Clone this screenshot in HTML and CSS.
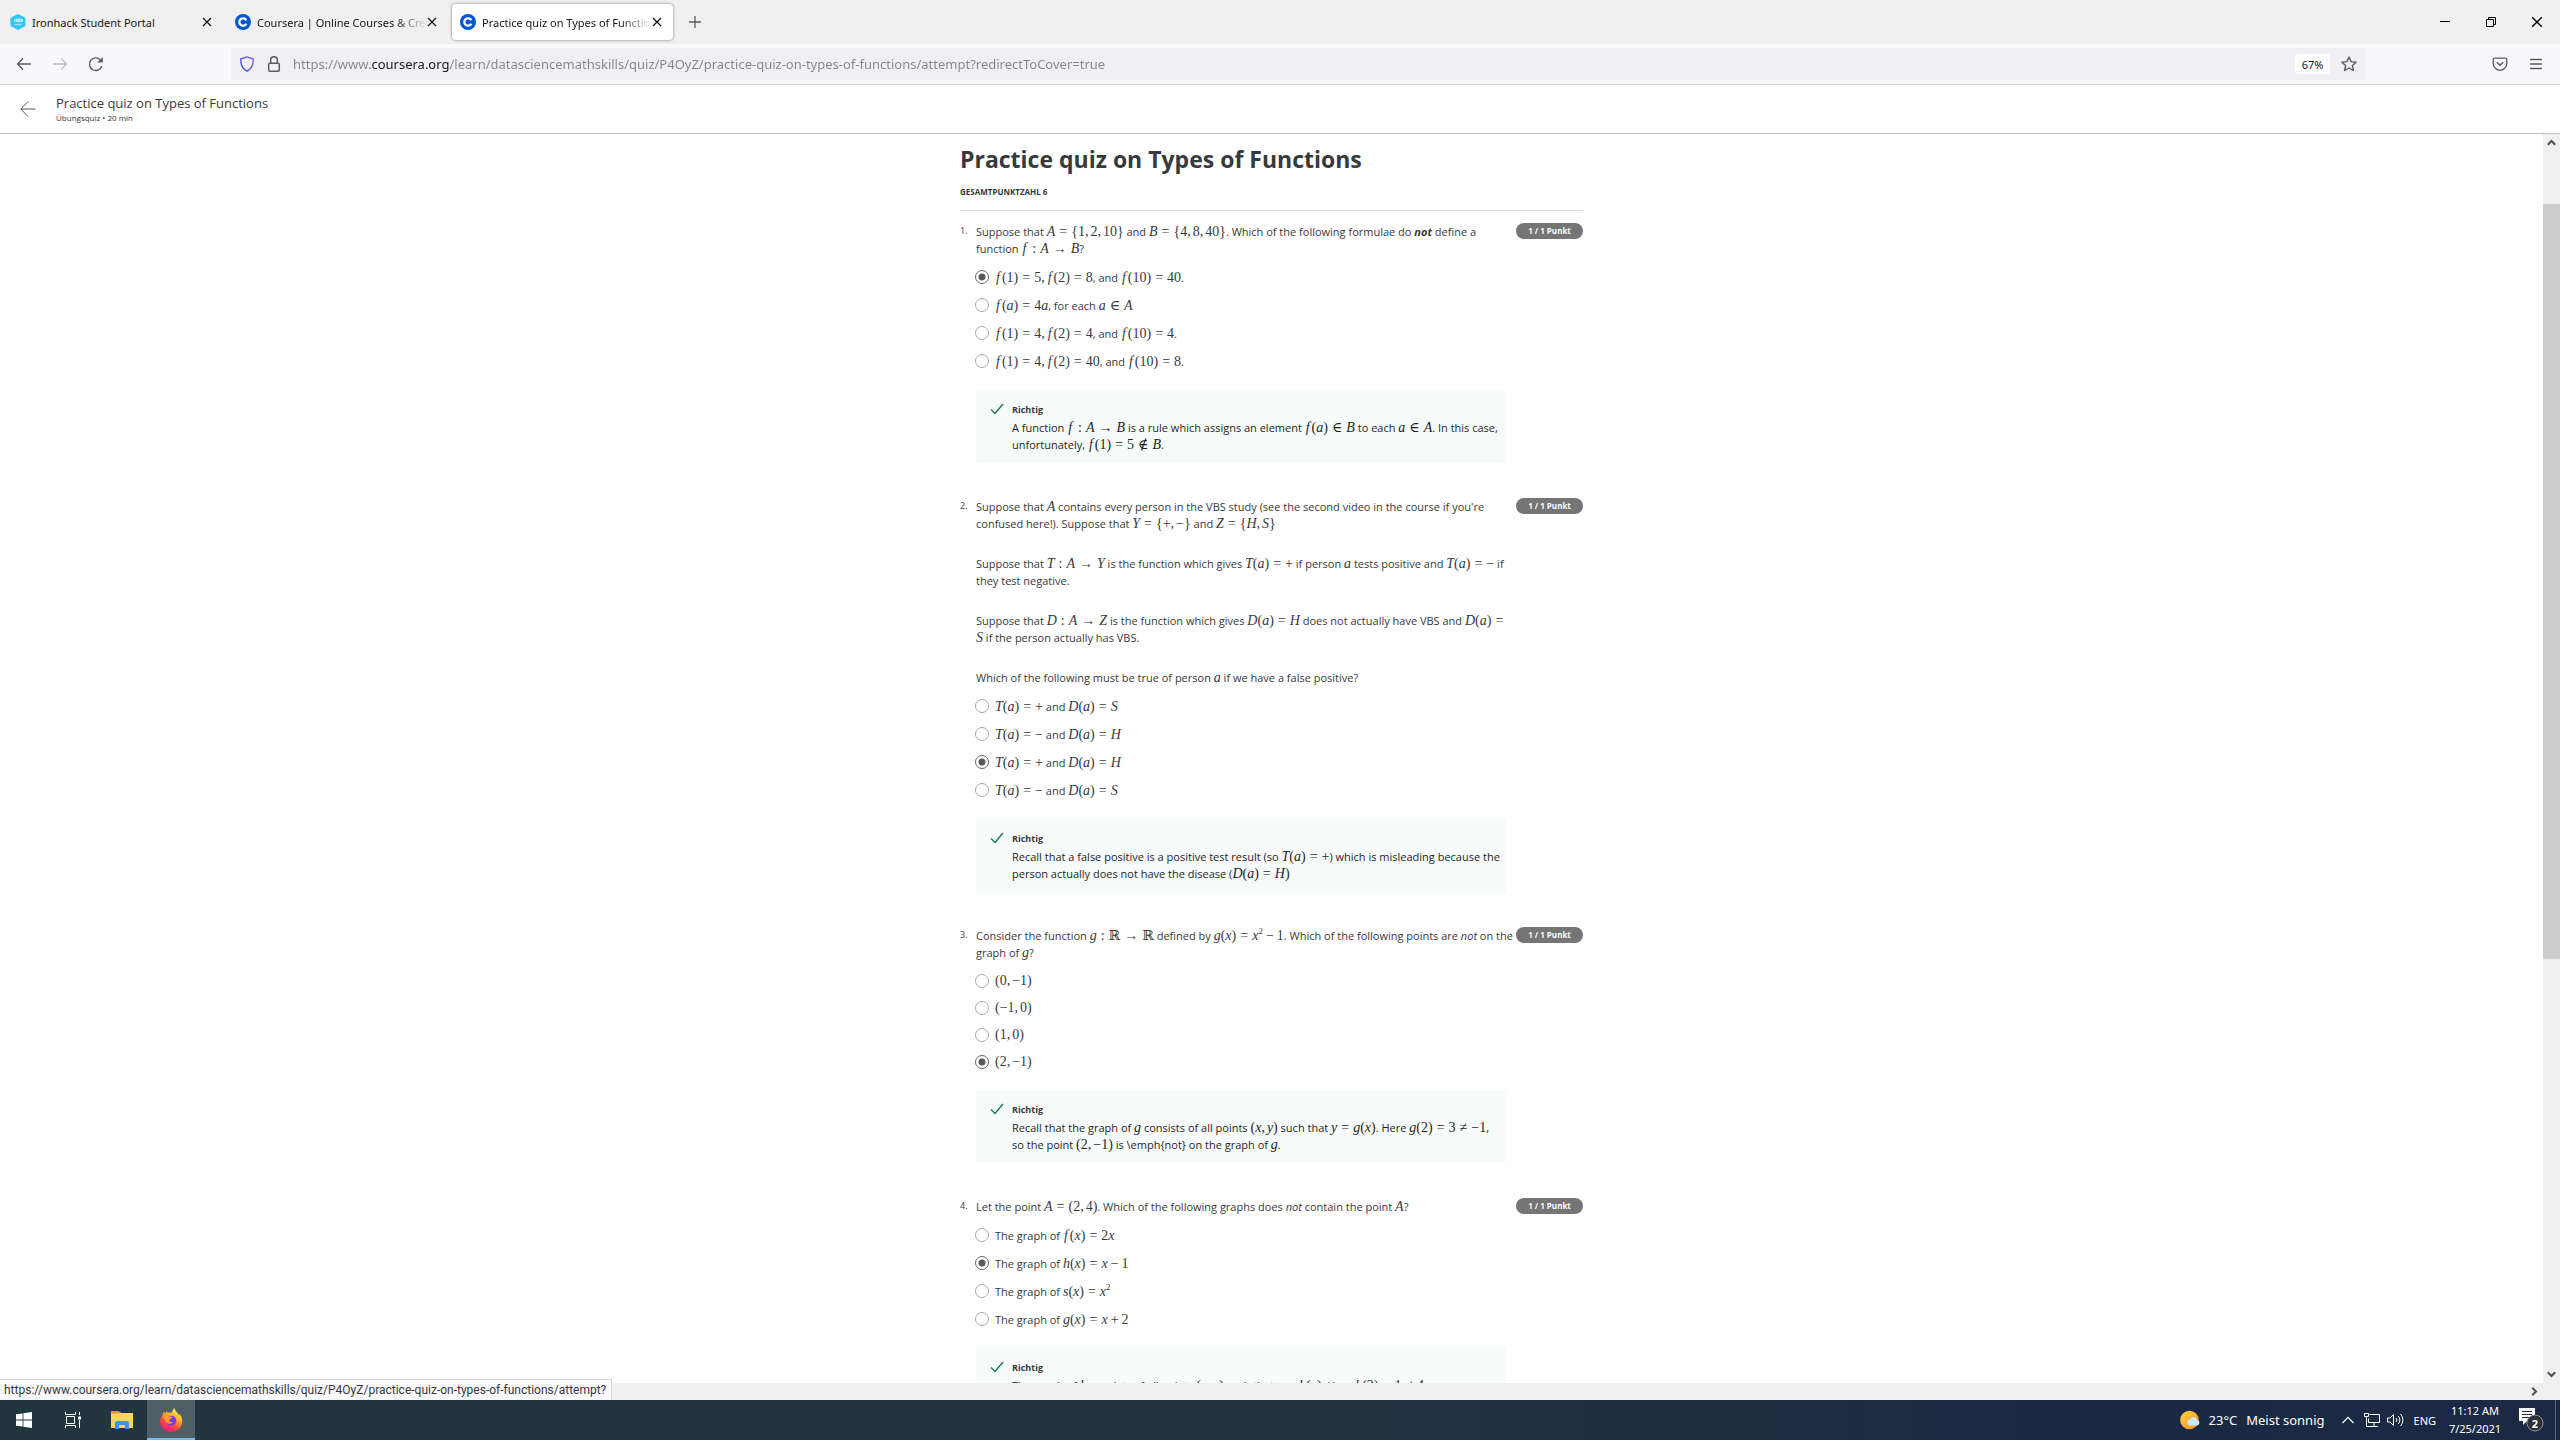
FILE: index.html
```
<!DOCTYPE html>
<html lang="de">
<head>
<meta charset="utf-8">
<meta name="viewport" content="width=device-width, initial-scale=1">
<title>Practice quiz on Types of Functions</title>
<link rel="stylesheet" href="styles.css">
</head>
<body>
<svg class="defs" width="0" height="0" aria-hidden="true">
  <symbol id="x" viewBox="0 0 10 10"><path d="M1 1l8 8M9 1l-8 8" fill="none" stroke="currentColor" stroke-width="1.2"/></symbol>
  <symbol id="c" viewBox="0 0 16 16"><circle cx="8" cy="8" r="8" fill="#0056d2"/><path d="M11.3 9.7A3.7 3.7 0 1 1 11.3 6.300" fill="none" stroke="#fff" stroke-width="2.300"/></symbol>
  <symbol id="check" viewBox="0 0 14 12"><path d="M1 6.500L5 10.500L13 1" fill="none" stroke="#1d7c50" stroke-width="1.500"/></symbol>
</svg>

<header class="tabbar">
  <div class="tab">
    <svg width="16" height="16" viewBox="0 0 16 16"><path d="M8 0l7.500 4v8L8 16 .5 12V4z" fill="#2dc5fa"/><path d="M4.500 5v3M6 8V5h1.500v1.500H6l1.500 1.500M8.500 5H10v3H8.500zM11 8V5l1.500 3V5" fill="none" stroke="#e8faff" stroke-width=".8"/><path d="M4.500 10.500h7" stroke="#9be3fb" stroke-width="1.500"/></svg>
    <span class="tab-title">Ironhack Student Portal</span>
    <button class="tab-close" aria-label="Close tab"><svg width="10" height="10"><use href="#x"/></svg></button>
  </div>
  <div class="tab">
    <svg width="16" height="16"><use href="#c"/></svg>
    <span class="tab-title fade">Coursera | Online Courses &amp; Credentials</span>
    <button class="tab-close" aria-label="Close tab"><svg width="10" height="10"><use href="#x"/></svg></button>
  </div>
  <div class="tab active">
    <svg width="16" height="16"><use href="#c"/></svg>
    <span class="tab-title fade">Practice quiz on Types of Functions</span>
    <button class="tab-close" aria-label="Close tab"><svg width="10" height="10"><use href="#x"/></svg></button>
  </div>
  <button class="tool" aria-label="New tab"><svg width="14" height="14" viewBox="0 0 14 14"><path d="M7 1v12M1 7h12" stroke="#5b5b66" stroke-width="1.300"/></svg></button>
  <div class="window-buttons">
    <button aria-label="Minimize"><svg width="10" height="10" viewBox="0 0 10 10"><path d="M0 4.500h10" stroke="#000"/></svg></button>
    <button aria-label="Restore"><svg width="10" height="10" viewBox="0 0 10 10"><path d="M.5 2.500h7v7h-7zM2.500 2.500v-2h7v7h-2" fill="none" stroke="#000"/></svg></button>
    <button aria-label="Close"><svg width="12" height="12"><use href="#x"/></svg></button>
  </div>
</header>

<nav class="toolbar">
  <button class="tool" aria-label="Back"><svg width="16" height="16" viewBox="0 0 16 16"><path d="M15 8H1.500M7 2.500L1.500 8 7 13.500" fill="none" stroke="#5b5b66" stroke-width="1.400"/></svg></button>
  <button class="tool" aria-label="Forward" disabled><svg width="16" height="16" viewBox="0 0 16 16"><path d="M1 8h13.500M9 2.500L14.500 8 9 13.500" fill="none" stroke="#bdbdc2" stroke-width="1.400"/></svg></button>
  <button class="tool" aria-label="Reload"><svg width="16" height="16" viewBox="0 0 16 16"><path d="M13.800 10A6.300 6.300 0 1 1 12.500 4" fill="none" stroke="#5b5b66" stroke-width="1.400"/><path d="M14.800 1v5.500H9.300z" fill="#5b5b66"/></svg></button>
  <div class="urlbar">
    <svg width="16" height="16" viewBox="0 0 16 16"><defs><linearGradient id="sh" x1="0" y1="1" x2="1" y2="0"><stop offset="0" stop-color="#2b4fd0"/><stop offset="1" stop-color="#9a5cff"/></linearGradient></defs><path d="M8 .8l6.300 2.200c.2 5.500-1.300 9.500-6.300 12.200C3 12.500 1.500 8.500 1.700 3z" fill="none" stroke="url(#sh)" stroke-width="1.400" stroke-linejoin="round"/></svg>
    <svg width="16" height="16" viewBox="0 0 16 16"><rect x="2.700" y="7.200" width="10.600" height="8" rx="1.200" fill="none" stroke="#5b5b66" stroke-width="1.500"/><path d="M4.700 7V4a3.300 3.300 0 0 1 6.600 0v3" fill="none" stroke="#5b5b66" stroke-width="1.500"/></svg>
    <input class="url" aria-label="Address" value="https://www.coursera.org/learn/datasciencemathskills/quiz/P4OyZ/practice-quiz-on-types-of-functions/attempt?redirectToCover=true">
    <button class="zoom-level">67%</button>
    <button class="star" aria-label="Bookmark"><svg width="16" height="16" viewBox="0 0 16 16"><path d="M8 1l2.100 4.600 5 .6-3.700 3.400 1 4.900L8 12l-4.400 2.500 1-4.900L.9 6.200l5-.6z" fill="none" stroke="#5b5b66" stroke-width="1.400" stroke-linejoin="round"/></svg></button>
  </div>
  <button class="tool" aria-label="Pocket"><svg width="16" height="16" viewBox="0 0 16 16"><path d="M2.500 2.200h11a1.300 1.300 0 0 1 1.300 1.300V7.500a6.800 6.800 0 0 1-13.600 0V3.500a1.300 1.300 0 0 1 1.300-1.300z" fill="none" stroke="#5b5b66" stroke-width="1.300"/><path d="M4.800 6.200L8 9.200l3.200-3" fill="none" stroke="#5b5b66" stroke-width="1.500"/></svg></button>
  <button class="tool" aria-label="Menu"><svg width="14" height="14" viewBox="0 0 14 14"><path d="M1 2.500h12M1 7h12M1 11.500h12" stroke="#5b5b66" stroke-width="1.300"/></svg></button>
</nav>

<div class="quiz-header">
  <a href="#quiz" class="back" aria-label="Zurück"><svg width="16" height="16" viewBox="0 0 16 16"><path d="M15.500 8H1M8 .5L.8 8 8 15.500" fill="none" stroke="#555" stroke-width="1"/></svg></a>
  <div>
    <div class="quiz-name">Practice quiz on Types of Functions</div>
    <div class="quiz-meta">Übungsquiz • 20 min</div>
  </div>
</div>

<div class="viewport">
<main id="quiz">
  <div class="quiz">
    <h1>Practice quiz on Types of Functions</h1>
    <p class="total">GESAMTPUNKTZAHL 6</p>

    <section class="question">
      <span class="num">1.</span>
      <div class="body">
        <p>Suppose that <span class="m"><i>A</i><b>=</b>{1,<s></s>2,<s></s>10}</span> and <span class="m"><i>B</i><b>=</b>{4,<s></s>8,<s></s>40}</span>. Which of the following formulae do <strong><em>not</em></strong> define a<br>function <span class="m"><i class="f">f</i><b>:</b><i>A</i><b>→</b><i>B</i></span>?</p>
        <div class="options">
          <label><input type="radio" name="q1" checked><span><span class="m"><i class="f">f</i>(1)<b>=</b>5,<s></s><i class="f">f</i>(2)<b>=</b>8</span>, and <span class="m"><i class="f">f</i>(10)<b>=</b>40</span>.</span></label>
          <label><input type="radio" name="q1"><span><span class="m"><i class="f">f</i>(<i>a</i>)<b>=</b>4<i>a</i></span>, for each <span class="m"><i>a</i><b>∈</b><i>A</i></span></span></label>
          <label><input type="radio" name="q1"><span><span class="m"><i class="f">f</i>(1)<b>=</b>4,<s></s><i class="f">f</i>(2)<b>=</b>4</span>, and <span class="m"><i class="f">f</i>(10)<b>=</b>4</span>.</span></label>
          <label><input type="radio" name="q1"><span><span class="m"><i class="f">f</i>(1)<b>=</b>4,<s></s><i class="f">f</i>(2)<b>=</b>40</span>, and <span class="m"><i class="f">f</i>(10)<b>=</b>8</span>.</span></label>
        </div>
        <div class="feedback">
          <svg width="14" height="12"><use href="#check"/></svg>
          <div><h2>Richtig</h2>
          <p>A function <span class="m"><i class="f">f</i><b>:</b><i>A</i><b>→</b><i>B</i></span> is a rule which assigns an element <span class="m"><i class="f">f</i>(<i>a</i>)<b>∈</b><i>B</i></span> to each <span class="m"><i>a</i><b>∈</b><i>A</i></span>. In this case,<br>unfortunately, <span class="m"><i class="f">f</i>(1)<b>=</b>5<b>∉</b><i>B</i></span>.</p></div>
        </div>
      </div>
      <span class="points">1 / 1 Punkt</span>
    </section>

    <section class="question">
      <span class="num">2.</span>
      <div class="body">
        <p>Suppose that <span class="m"><i>A</i></span> contains every person in the VBS study (see the second video in the course if you're<br>confused here!). Suppose that <span class="m"><i>Y</i><b>=</b>{+,<s></s>−}</span> and <span class="m"><i>Z</i><b>=</b>{<i>H</i>,<s></s><i>S</i>}</span></p>
        <p>Suppose that <span class="m"><i>T</i><b>:</b><i>A</i><b>→</b><i>Y</i></span> is the function which gives <span class="m"><i>T</i>(<i>a</i>)<b>=</b>+</span> if person <span class="m"><i>a</i></span> tests positive and <span class="m"><i>T</i>(<i>a</i>)<b>=</b>−</span> if<br>they test negative.</p>
        <p>Suppose that <span class="m"><i>D</i><b>:</b><i>A</i><b>→</b><i>Z</i></span> is the function which gives <span class="m"><i>D</i>(<i>a</i>)<b>=</b><i>H</i></span> does not actually have VBS and <span class="m"><i>D</i>(<i>a</i>)<b>=</b></span><br><span class="m"><i>S</i></span> if the person actually has VBS.</p>
        <p>Which of the following must be true of person <span class="m"><i>a</i></span> if we have a false positive?</p>
        <div class="options">
          <label><input type="radio" name="q2"><span><span class="m"><i>T</i>(<i>a</i>)<b>=</b>+</span> and <span class="m"><i>D</i>(<i>a</i>)<b>=</b><i>S</i></span></span></label>
          <label><input type="radio" name="q2"><span><span class="m"><i>T</i>(<i>a</i>)<b>=</b>−</span> and <span class="m"><i>D</i>(<i>a</i>)<b>=</b><i>H</i></span></span></label>
          <label><input type="radio" name="q2" checked><span><span class="m"><i>T</i>(<i>a</i>)<b>=</b>+</span> and <span class="m"><i>D</i>(<i>a</i>)<b>=</b><i>H</i></span></span></label>
          <label><input type="radio" name="q2"><span><span class="m"><i>T</i>(<i>a</i>)<b>=</b>−</span> and <span class="m"><i>D</i>(<i>a</i>)<b>=</b><i>S</i></span></span></label>
        </div>
        <div class="feedback">
          <svg width="14" height="12"><use href="#check"/></svg>
          <div><h2>Richtig</h2>
          <p>Recall that a false positive is a positive test result (so <span class="m"><i>T</i>(<i>a</i>)<b>=</b>+</span>) which is misleading because the<br>person actually does not have the disease (<span class="m"><i>D</i>(<i>a</i>)<b>=</b><i>H</i>)</span></p></div>
        </div>
      </div>
      <span class="points">1 / 1 Punkt</span>
    </section>

    <section class="question">
      <span class="num">3.</span>
      <div class="body">
        <p>Consider the function <span class="m"><i>g</i><b>:</b>ℝ<b>→</b>ℝ</span> defined by <span class="m"><i>g</i>(<i>x</i>)<b>=</b><i>x</i><sup>2</sup><u>−</u>1</span>. Which of the following points are <em>not</em> on the<br>graph of <span class="m"><i>g</i></span>?</p>
        <div class="options compact">
          <label><input type="radio" name="q3"><span class="m">(0,<s></s>−1)</span></label>
          <label><input type="radio" name="q3"><span class="m">(−1,<s></s>0)</span></label>
          <label><input type="radio" name="q3"><span class="m">(1,<s></s>0)</span></label>
          <label><input type="radio" name="q3" checked><span class="m">(2,<s></s>−1)</span></label>
        </div>
        <div class="feedback">
          <svg width="14" height="12"><use href="#check"/></svg>
          <div><h2>Richtig</h2>
          <p>Recall that the graph of <span class="m"><i>g</i></span> consists of all points <span class="m">(<i>x</i>,<s></s><i>y</i>)</span> such that <span class="m"><i>y</i><b>=</b><i>g</i>(<i>x</i>)</span>. Here <span class="m"><i>g</i>(2)<b>=</b>3<b>≠</b>−1</span>,<br>so the point <span class="m">(2,<s></s>−1)</span> is \emph{not} on the graph of <span class="m"><i>g</i></span>.</p></div>
        </div>
      </div>
      <span class="points">1 / 1 Punkt</span>
    </section>

    <section class="question">
      <span class="num">4.</span>
      <div class="body">
        <p>Let the point <span class="m"><i>A</i><b>=</b>(2,<s></s>4)</span>. Which of the following graphs does <em>not</em> contain the point <span class="m"><i>A</i></span>?</p>
        <div class="options">
          <label><input type="radio" name="q4"><span>The graph of <span class="m"><i class="f">f</i>(<i>x</i>)<b>=</b>2<i>x</i></span></span></label>
          <label><input type="radio" name="q4" checked><span>The graph of <span class="m"><i>h</i>(<i>x</i>)<b>=</b><i>x</i><u>−</u>1</span></span></label>
          <label><input type="radio" name="q4"><span>The graph of <span class="m"><i>s</i>(<i>x</i>)<b>=</b><i>x</i><sup>2</sup></span></span></label>
          <label><input type="radio" name="q4"><span>The graph of <span class="m"><i>g</i>(<i>x</i>)<b>=</b><i>x</i><u>+</u>2</span></span></label>
        </div>
        <div class="feedback">
          <svg width="14" height="12"><use href="#check"/></svg>
          <div><h2>Richtig</h2>
          <p>The graph of <span class="m"><i>h</i></span> consists of all points <span class="m">(<i>x</i>,<s></s><i>y</i>)</span> such that <span class="m"><i>y</i><b>=</b><i>h</i>(<i>x</i>)</span>. Here <span class="m"><i>h</i>(2)<b>=</b>1<b>≠</b>4</span></p></div>
        </div>
      </div>
      <span class="points">1 / 1 Punkt</span>
    </section>
  </div>
</main>
<div class="vscroll">
  <button aria-label="Scroll up"><svg width="9" height="7" viewBox="0 0 9 7"><path d="M.8 5.700L4.500 2l3.700 3.700" fill="none" stroke="#505050" stroke-width="2"/></svg></button>
  <div class="track"><div class="thumb"></div></div>
  <button aria-label="Scroll down"><svg width="9" height="7" viewBox="0 0 9 7"><path d="M.8 1.300L4.500 5l3.700-3.700" fill="none" stroke="#505050" stroke-width="2"/></svg></button>
</div>
</div>

<footer class="hscroll">
  <div class="status">https://www.coursera.org/learn/datasciencemathskills/quiz/P4OyZ/practice-quiz-on-types-of-functions/attempt?</div>
  <button aria-label="Scroll right"><svg width="7" height="9" viewBox="0 0 7 9"><path d="M1.300 .8L5 4.500 1.300 8.200" fill="none" stroke="#505050" stroke-width="2"/></svg></button>
</footer>

<div class="taskbar">
  <button aria-label="Start"><svg width="16" height="16" viewBox="0 0 16 16"><path d="M0 2.300L6.600 1.400v6.200H0zM7.400 1.300L16 0v7.600H7.400zM0 8.400h6.600v6.200L0 13.700zM7.400 8.400H16V16l-8.600-1.300z" fill="#fff"/></svg></button>
  <button aria-label="Task View"><svg width="16" height="16" viewBox="0 0 16 16"><path d="M.5 0v2.500h10V0M.5 16v-2.500h10V16M1.500 4.500h8v7h-8z" fill="none" stroke="#fff"/><path d="M14.500 0v3M14.500 8v8" stroke="#fff"/><path d="M13 4.500h3v3h-3z" fill="#fff"/></svg></button>
  <button aria-label="Explorer"><svg width="22" height="18" viewBox="0 0 22 18"><path d="M0 1h9l1 1h12v15H0z" fill="#ffd45c"/><path d="M0 0h8l1 2.500H0z" fill="#e09a0c"/><path d="M4 18v-6a2 2 0 0 1 2-2h10a2 2 0 0 1 2 2v6h-4v-4H8v4z" fill="#3b96dd"/></svg></button>
  <button class="running" aria-label="Firefox"><svg width="24" height="24" viewBox="0 0 24 24"><defs><linearGradient id="ff" x1=".8" y1=".1" x2=".3" y2="1"><stop offset="0" stop-color="#fff44f"/><stop offset=".35" stop-color="#ffa52a"/><stop offset=".65" stop-color="#ff4a3d"/><stop offset="1" stop-color="#e31587"/></linearGradient></defs><path d="M15.500 0c-2 2-2.500 3.500-2.300 5-1.400-.6-3-.6-4.200 0L7.500 3 6.700 5 4 4.200 3.500 7.500C1.500 9.500 1 11.500 1 13.500 1 19 5.500 24 12 24s11.200-5 11.200-10.800c0-3.500-1.400-6-3-7.500l.2 2.300C19 4.500 16 3.500 15.500 0z" fill="url(#ff)"/><circle cx="12.300" cy="12.800" r="5" fill="#7a3be8"/><path d="M3.500 7c2 0 3.500-.3 5.500.5 1 1 2.500 1.200 4.500 1.500-.5 1.500-2.500 1.500-3 3-.5 1.800 1.500 2.700 3.500 2-1 2.500-6 2.500-7.500-1C5.500 10.500 4 10 3.500 7z" fill="#ff9a2b"/></svg></button>
  <div class="tray">
    <svg width="20" height="20" viewBox="0 0 20 20"><defs><linearGradient id="sun" x2="1" y2="1"><stop offset="0" stop-color="#ffd84a"/><stop offset="1" stop-color="#f58a1c"/></linearGradient></defs><circle cx="9.500" cy="10" r="9.300" fill="url(#sun)"/><path d="M10.500 15.500a3 3 0 0 1-.3-6A3.800 3.800 0 0 1 17.300 10a2.800 2.800 0 0 1-.3 5.500z" fill="#cfe9fb"/></svg>
    <span class="weather">23°C</span>
    <span class="weather">Meist sonnig</span>
    <svg class="chev" width="12" height="8" viewBox="0 0 12 8"><path d="M.5 7L6 1.300 11.500 7" fill="none" stroke="#fff" stroke-width="1.200"/></svg>
    <svg width="16" height="14" viewBox="0 0 16 14"><path d="M5.500 1.500h10v8h-11v-4M10 10v3M6 13.500h8" fill="none" stroke="#fff"/><path d="M.5.5h4v3h-4zM2.500 4v9.500H6" fill="none" stroke="#fff"/></svg>
    <svg width="17" height="14" viewBox="0 0 17 14"><path d="M.5 5h2.500L6.500 1.500v11L3 9H.5z" fill="none" stroke="#fff"/><path d="M9 5a3 3 0 0 1 0 4M11.300 3a6 6 0 0 1 0 8M13.600 1a9 9 0 0 1 0 12" fill="none" stroke="#fff"/></svg>
    <span class="lang">ENG</span>
    <div class="clock"><span>11:12 AM</span><span>7/25/2021</span></div>
    <button class="notify" aria-label="Notifications"><svg width="26" height="26" viewBox="0 0 26 26"><path d="M1 1h16v13H9l-4 4v-4H1z" fill="#fff"/><path d="M4 4.500h10M4 7.500h10M4 10.500h7" stroke="#1b2945"/><circle cx="17" cy="16" r="8" fill="#2b2f36" stroke="#8a8f98"/></svg><span class="count">2</span></button>
  </div>
</div>
</body>
</html>
```
FILE: styles.css
```
* { box-sizing: border-box; }
body {
  margin: 0;
  height: 100vh;
  display: flex;
  flex-direction: column;
  overflow: hidden;
  background: #fff;
  color: #373a3c;
  font: 11px/17px "Open Sans", "Noto Sans", sans-serif;
}
button {
  display: flex;
  align-items: center;
  justify-content: center;
  padding: 0;
  border: 0;
  background: none;
  color: inherit;
  font: inherit;
}
svg { display: block; flex: none; }
.defs { position: absolute; }

/* Tab strip */
.tabbar {
  display: flex;
  align-items: center;
  gap: 4px;
  height: 44px;
  padding-left: 2px;
  background: #f0f0f0;
  color: #15141a;
  font-family: "Noto Sans", sans-serif;
}
.tab {
  display: flex;
  align-items: center;
  gap: 6px;
  width: 221px;
  height: 36px;
  padding: 0 11px 0 8px;
  border-radius: 4px;
}
.tab.active { background: #fff; box-shadow: 0 0 3px rgba(0, 0, 0, .5); }
.tab-title { flex: 1; overflow: hidden; white-space: nowrap; }
.tab-title.fade {
  margin-right: -6px;
  -webkit-mask-image: linear-gradient(to left, transparent, #000 32px);
  mask-image: linear-gradient(to left, transparent, #000 32px);
}
.window-buttons { display: flex; margin-left: auto; color: #000; }
.window-buttons button { width: 46px; height: 44px; }

/* Navigation toolbar */
.toolbar {
  display: flex;
  align-items: center;
  height: 41px;
  padding: 0 6px;
  background: #f9f9fb;
  border-bottom: 1px solid #ccc;
}
.tool { width: 36px; height: 36px; }
.urlbar {
  flex: 1;
  display: flex;
  align-items: center;
  gap: 11px;
  height: 32px;
  margin: 0 117px;
  padding: 0 8px;
  border-radius: 4px;
  background: #f0f0f4;
}
.url {
  flex: 1;
  min-width: 0;
  height: 24px;
  padding: 0;
  border: 0;
  outline: 0;
  font: 13px/24px "Noto Sans", sans-serif;
  color: transparent;
  background: linear-gradient(90deg, #84848c 77px, #15141a 77px, #15141a 157px, #84848c 157px);
  -webkit-background-clip: text;
  background-clip: text;
}
.zoom-level {
  width: 35px;
  height: 20px;
  border-radius: 3px;
  background: #fff;
  color: #15141a;
  font-family: "Noto Sans", sans-serif;
}

/* Quiz header */
.quiz-header {
  display: flex;
  align-items: center;
  gap: 20px;
  height: 49px;
  padding-left: 20px;
  border-bottom: 1px solid #bdbdbd;
}
.quiz-name { font-size: 13px; line-height: 18px; }
.quiz-meta { font-size: 8px; line-height: 12px; }

/* Quiz content */
.viewport { flex: 1; min-height: 0; display: flex; }
main { flex: 1; overflow: hidden; }
.quiz { width: 623px; margin: 0 auto; padding-top: 9px; white-space: nowrap; }
h1 { margin: 0; font-size: 23px; line-height: 32px; color: #373a3c; }
.total {
  margin: 0 0 12px;
  padding: 11px 0 12px;
  border-bottom: 1px solid #dcdcdc;
  font-size: 8px;
  line-height: 12px;
  font-weight: 700;
}
.question {
  display: grid;
  grid-template-columns: 16px minmax(0, 1fr) 77px;
  align-items: start;
  margin-bottom: 35px;
}
.num { font-size: 9px; line-height: 16px; }
.body > p { margin: 0 0 23px; }
.body > p:has(+ .options) { margin-bottom: 6px; }
.points {
  justify-self: end;
  width: 67px;
  height: 16px;
  border-radius: 8px;
  background: #757575;
  color: #fff;
  font-size: 8px;
  line-height: 16px;
  font-weight: 700;
  text-align: center;
}
.options label { display: flex; align-items: center; gap: 6px; height: 28px; }
.options.compact label { height: 27px; }
input[type="radio"] {
  appearance: none;
  width: 14px;
  height: 14px;
  margin: 0 0 0 -1px;
  border: 1px solid #aaa;
  border-radius: 50%;
  background: #fff;
}
input[type="radio"]:checked {
  border-color: #666;
  background: radial-gradient(circle, #595959 3px, #fff 4px);
}
.feedback {
  display: flex;
  gap: 8px;
  margin-top: 15px;
  padding: 11px 14px 10px;
  background: #f7fbfa;
  color: #1f1f1f;
}
.feedback svg { margin-top: 2px; }
.feedback h2 { margin: 0 0 1px; font-size: 9px; line-height: 17px; color: #373a3c; }
.feedback p { margin: 0; }

/* Inline formulas: b = relation, u = binary operator, s = space after a comma */
.m { font: 14px/14px "Liberation Serif", "DejaVu Serif", serif; }
.m b { margin: 0 4px; font-weight: 400; }
.m u { margin: 0 3px; text-decoration: none; }
.m s { margin-right: 2px; }
.m .f { margin: 0 2px 0 1px; }
.m sup { font-size: 9px; line-height: 9px; }

/* Scrollbars */
.vscroll { display: flex; flex-direction: column; width: 17px; background: #f0f0f0; }
.vscroll button { height: 17px; }
.track { flex: 1; padding-top: 53px; }
.thumb { height: 65%; background: #cdcdcd; }
.hscroll {
  position: relative;
  display: flex;
  justify-content: flex-end;
  height: 17px;
  padding-right: 17px;
  background: #f0f0f0;
}
.hscroll button { width: 17px; }
.status {
  position: absolute;
  left: 0;
  bottom: 0;
  height: 21px;
  padding: 0 5px 0 4px;
  border: solid #d8d8d8;
  border-width: 1px 1px 0 0;
  background: #f9f9fb;
  color: #38383d;
  font: 12px/20px Roboto, sans-serif;
}

/* Taskbar */
.taskbar {
  display: flex;
  gap: 1px;
  height: 40px;
  background: linear-gradient(90deg, #22363f, #22343f 50%, #1b2843 80%, #1b2945);
  color: #fff;
  font-family: "Noto Sans", sans-serif;
}
.taskbar > button { width: 48px; }
.running { background: #4e5f66; box-shadow: inset 0 -2px #76b9ed; }
.tray { display: flex; align-items: center; margin-left: auto; padding-right: 4px; }
.tray::after { content: ""; width: 1px; height: 40px; margin-left: 11px; background: #5a6478; }
.weather { margin-left: 9px; font-size: 13px; }
.chev { margin: 0 10px 0 17px; }
.tray svg + svg { margin-right: 7px; }
.tray .lang { margin: 0 11px 0 3px; }
.clock { display: flex; flex-direction: column; align-items: center; width: 56px; }
.clock span { line-height: 18px; }
.notify { position: relative; margin-left: 15px; }
.count { position: absolute; left: 9px; top: 8px; width: 16px; line-height: 17px; text-align: center; font-weight: 700; }
```
